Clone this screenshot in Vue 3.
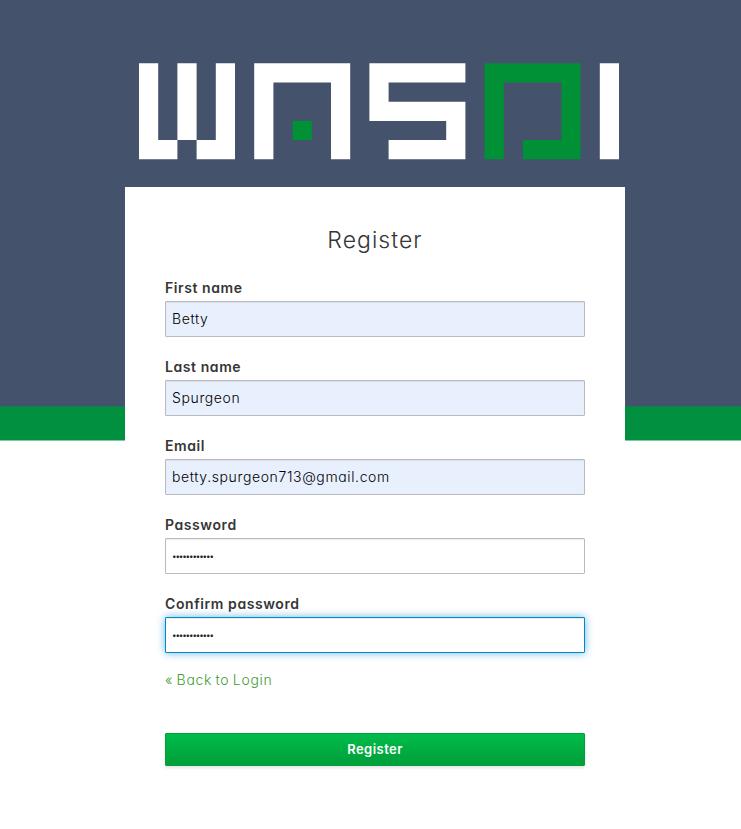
<script setup>
import { ref } from 'vue'

const fields = ref([
  { id: 'firstName', label: 'First name', type: 'text', value: 'Betty', filled: true },
  { id: 'lastName', label: 'Last name', type: 'text', value: 'Spurgeon', filled: true },
  { id: 'email', label: 'Email', type: 'text', value: 'betty.spurgeon713@gmail.com', filled: true },
  { id: 'password', label: 'Password', type: 'password', value: '••••••••••••' },
  { id: 'confirm', label: 'Confirm password', type: 'password', value: '••••••••••••', active: true }
])
</script>

<template>
  <div class="page">
    <header class="brand">
      <svg class="logo" viewBox="0 0 25 5" role="img" aria-label="WASDI">
        <g fill="#fff">
          <path d="M0 0H1V4H2V0H3V4H4V0H5V5H3V4H2V5H0Z" />
          <path d="M6 5V0H11V5H10V1H7V5Z" />
          <path d="M12 0H17V1H13V2H17V5H13V4H16V3H12Z" />
          <path d="M24 0H25V5H24Z" />
        </g>
        <g fill="#009036">
          <path d="M8 3H9V4H8Z" />
          <path d="M18 5V0H23V5H20V4H22V1H19V5Z" />
        </g>
      </svg>
    </header>
    <main class="card">
      <h1>Register</h1>
      <form @submit.prevent>
        <div v-for="f in fields" :key="f.id" class="field">
          <label :for="f.id">{{ f.label }}</label>
          <input
            :id="f.id"
            v-model="f.value"
            :type="f.type"
            :class="{ filled: f.filled, active: f.active }"
            autocomplete="off"
          />
        </div>
        <a class="back" href="#">« Back to Login</a>
        <button type="submit">Register</button>
      </form>
    </main>
  </div>
</template>

<style>
body {
  margin: 0;
  background: #fff;
}
</style>

<style scoped>
.page {
  box-sizing: border-box;
  height: 829px;
  padding: 63px 0 0 125px;
  overflow: hidden;
  font-family: Inter, sans-serif;
  font-feature-settings: "cv11";
  color: #363636;
  background: linear-gradient(#45526c 0 406px, #1c7850 406px 407px, #009040 407px 440px, #80c8a0 440px 441px, #fff 441px);
}
.brand {
  height: 124px;
  padding-left: 14px;
}
.logo {
  display: block;
  width: 480px;
  height: 96.6px;
}
.card {
  box-sizing: border-box;
  width: 500px;
  height: 642px;
  padding: 40px 40px 0;
  background: #fff;
}
h1 {
  margin: 0 0 34px;
  font-size: 23px;
  font-weight: 300;
  line-height: 27px;
  letter-spacing: 1.05px;
  text-align: center;
}
form {
  display: flex;
  flex-direction: column;
  margin-top: -9px;
}
.field {
  display: flex;
  flex-direction: column;
  height: 79px;
}
label {
  height: 22px;
  font-size: 14px;
  font-weight: 600;
  line-height: 18px;
  letter-spacing: 0.58px;
}
input {
  box-sizing: border-box;
  width: 420px;
  height: 36px;
  padding: 0 6px 2px;
  border: 1px solid #bbb;
  border-radius: 1px;
  outline: none;
  background: #fff;
  box-shadow: inset 0 1px 1px rgba(3, 3, 3, 0.075);
  color: #000;
  font-family: inherit;
  font-feature-settings: inherit;
  font-size: 14px;
  font-weight: 300;
  letter-spacing: 0.62px;
}
input.filled {
  background: #e8f0fe;
}
input[type="password"] {
  padding-bottom: 0;
  color: #222;
  font-size: 8px;
  font-weight: 400;
  letter-spacing: -1.1px;
}
input.active {
  border-color: #0088ce;
  box-shadow: inset 0 1px 1px rgba(3, 3, 3, 0.075), 0 0 8px rgba(0, 136, 206, 0.6);
}
.back {
  align-self: flex-start;
  height: 22px;
  margin-top: -5px;
  color: #3f9c35;
  font-size: 14px;
  font-weight: 300;
  line-height: 22px;
  letter-spacing: 0.7px;
  word-spacing: -1.2px;
  text-decoration: none;
}
button {
  height: 33px;
  margin-top: 42px;
  padding: 0 0 2px;
  border: 1px solid #00a03a;
  border-radius: 1px;
  background: linear-gradient(#00bb4a, #009f39);
  box-shadow: 0 2px 3px rgba(3, 3, 3, 0.1);
  color: #fff;
  font-family: inherit;
  font-feature-settings: inherit;
  font-size: 13px;
  font-weight: 600;
  letter-spacing: 0.45px;
}
</style>
